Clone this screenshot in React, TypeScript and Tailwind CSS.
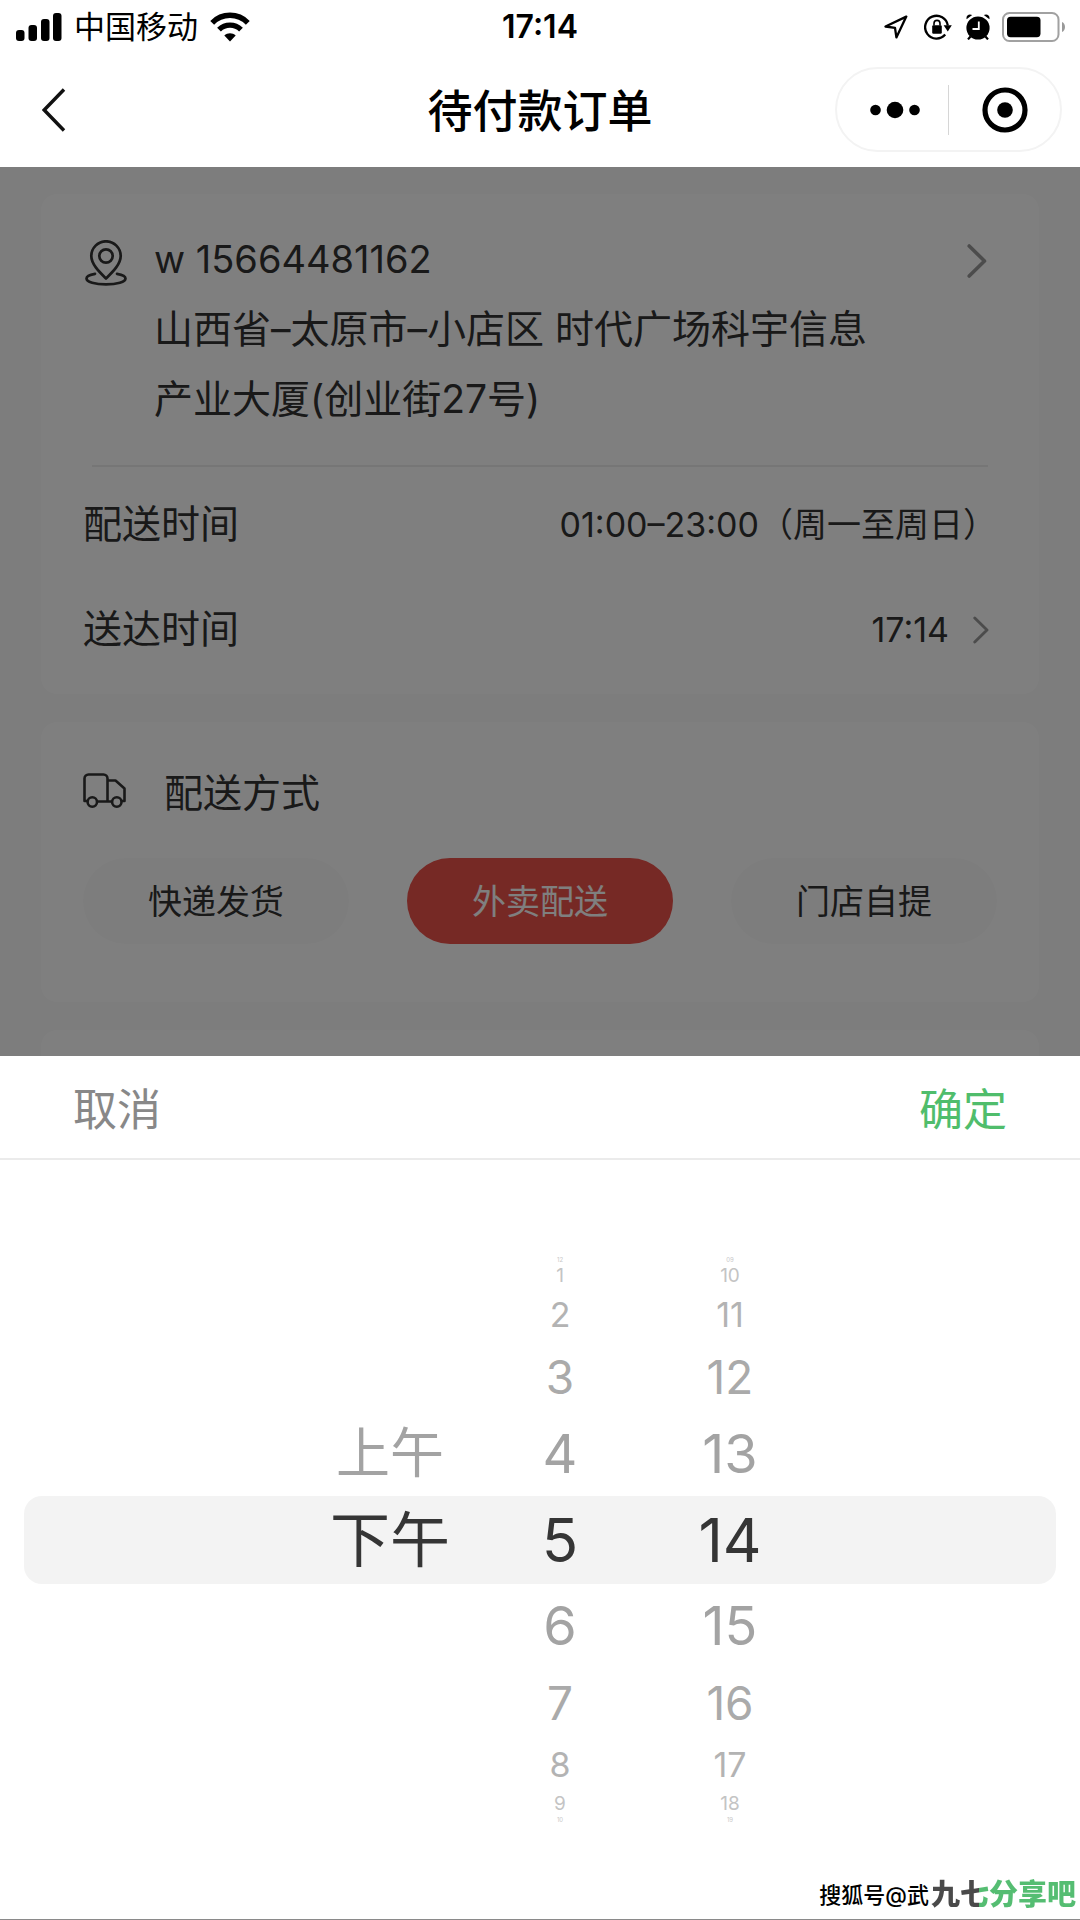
import React, { useState } from "react";

function StatusBar() {
  return (
    <div className="grid h-[54px] grid-cols-3 items-center px-4">
      <div className="flex items-center gap-3">
        <svg className="h-7 w-[46px]" viewBox="0 0 46 28" aria-hidden="true">
          <rect x="0" y="17" width="8.5" height="11" rx="3" />
          <rect x="12.5" y="12" width="8.5" height="16" rx="3" />
          <rect x="25" y="6" width="8.5" height="22" rx="3" />
          <rect x="37" y="0" width="8.5" height="28" rx="3" />
        </svg>
        <span className="text-[31px] leading-[40px]">中国移动</span>
        <svg className="h-[30px] w-10" viewBox="0 0 40 30" aria-hidden="true">
          <g fill="none" stroke="#000" strokeWidth="5.4">
            <path d="M2.2 10.8 C12 0.8 28 0.8 37.8 10.8" />
            <path d="M9 17.6 C15.2 11.6 24.8 11.6 31 17.6" />
          </g>
          <path d="M14.3 23.6 C17.5 20.4 22.5 20.4 25.7 23.6 L20 29.6 Z" />
        </svg>
      </div>
      <div className="text-center text-[32px] leading-[40px] font-semibold">17:14</div>
      <div className="-mr-0.5 flex items-center justify-end">
        <svg className="mr-4 h-6 w-6" viewBox="0 0 24 24" aria-hidden="true">
          <path d="M22.3 1.6 L1.5 11.5 L11 12.8 L12.4 22.4 Z" fill="none" stroke="#000" strokeWidth="2.3" strokeLinejoin="round" />
        </svg>
        <svg className="mr-3.5 h-7 w-7" viewBox="0 0 28 28" aria-hidden="true">
          <path d="M23.8 12.5 A11.4 11.4 0 1 0 21.2 21.6" fill="none" stroke="#000" strokeWidth="2.3" />
          <path d="M19.6 12.2 L27.8 12.2 L23.8 18.4 Z" />
          <rect x="8.2" y="12.3" width="9.6" height="8.4" rx="1.2" />
          <path d="M10 12.5 V10.4 a3 3 0 0 1 6 0 V12.5" fill="none" stroke="#000" strokeWidth="1.6" />
        </svg>
        <svg className="mr-3 h-[26px] w-6" viewBox="0 0 24 26" aria-hidden="true">
          <circle cx="12" cy="14" r="11.6" />
          <path d="M0.6 5.2 C-0.2 1.4 3 -0.6 6.2 1 Z M23.4 5.2 C24.2 1.4 21 -0.6 17.8 1 Z" />
          <path d="M4.5 22.5 L2 25.4 M19.5 22.5 L22 25.4" stroke="#000" strokeWidth="2.2" />
          <path d="M12.8 7.5 V15 H6.5" fill="none" stroke="#fff" strokeWidth="1.8" />
        </svg>
        <svg className="h-[30px] w-16" viewBox="0 0 64 30" aria-hidden="true">
          <rect x="1" y="1" width="55.5" height="28" rx="6.5" fill="none" stroke="#a1a1a1" strokeWidth="2" />
          <rect x="5" y="4.8" width="33.5" height="20.4" rx="3.6" />
          <path d="M60 10 C64 11.5 64 18.5 60 20 Z" fill="#999" />
        </svg>
      </div>
    </div>
  );
}

function NavBar() {
  return (
    <header className="grid h-[113px] grid-cols-3 items-center px-[18px] pb-0.5">
      <button type="button" aria-label="返回" className="ml-3.5 flex h-14 w-11 items-center justify-center">
        <svg className="h-11 w-6" viewBox="0 0 24 44" aria-hidden="true">
          <path d="M22 1.5 L2.2 22 L22 42.5" fill="none" stroke="#111" strokeWidth="3.4" />
        </svg>
      </button>
      <h1 className="pt-1 text-center text-[45px] leading-[60px] font-medium">待付款订单</h1>
      <div className="ml-auto flex h-[85px] w-[227px] items-center rounded-full border-2 border-[#f3f3f3]">
        <button type="button" aria-label="更多" className="flex h-full flex-1 items-center justify-center">
          <svg className="ml-1 h-[18px] w-[50px]" viewBox="0 0 50 18" aria-hidden="true">
            <circle cx="5.5" cy="9" r="5.3" />
            <circle cx="25" cy="9" r="8.3" />
            <circle cx="44.5" cy="9" r="5.3" />
          </svg>
        </button>
        <span className="h-[50px] w-px bg-[#d6d6d6]" />
        <button type="button" aria-label="关闭" className="flex h-full flex-1 items-center justify-center">
          <svg className="h-[46px] w-[46px]" viewBox="0 0 46 46" aria-hidden="true">
            <circle cx="23" cy="23" r="20" fill="none" stroke="#000" strokeWidth="5.2" />
            <circle cx="23" cy="23" r="7.8" />
          </svg>
        </button>
      </div>
    </header>
  );
}

function Chevron({ className }: { className: string }) {
  return (
    <svg className={className} viewBox="0 0 20 34" aria-hidden="true">
      <path d="M2.2 2 L17.5 17 L2.2 32" fill="none" stroke="#999" strokeWidth="3.6" strokeLinecap="round" strokeLinejoin="round" />
    </svg>
  );
}

function PinIcon() {
  return (
    <svg className="mt-4 ml-0.5 h-[46px] w-[42px] shrink-0" viewBox="0 0 42 46" aria-hidden="true">
      <g fill="none" stroke="#333" strokeWidth="2.7" strokeLinecap="round" strokeLinejoin="round">
        <path d="M21 38.5 C15 32.5 6.3 24.5 6.3 16 a14.7 14.7 0 0 1 29.4 0 C35.7 24.5 27 32.5 21 38.5 Z" />
        <circle cx="21" cy="16" r="6.7" />
        <path d="M10 33.8 C4.5 34.8 1.5 36.4 1.5 38.4 C1.5 41.8 10 44.4 21 44.4 C32 44.4 40.5 41.8 40.5 38.4 C40.5 36.4 37.5 34.8 32 33.8" />
      </g>
    </svg>
  );
}

function TruckIcon() {
  return (
    <svg className="mb-1 h-9 w-11" viewBox="0 0 44 36" aria-hidden="true">
      <g fill="none" stroke="#333" strokeWidth="2.6" strokeLinejoin="round">
        <path d="M4.5 28 H1.5 V5.5 a4 4 0 0 1 4 -4 H20.5 a4 4 0 0 1 4 4 V28.5" />
        <path d="M24.5 7.5 H32.5 L41.5 15.5 V28 H38.5 M14 28.5 H29" />
        <circle cx="9.3" cy="29" r="4.7" />
        <circle cx="33.8" cy="29" r="4.7" />
      </g>
    </svg>
  );
}

function DeliveryCard() {
  return (
    <section className="rounded-2xl bg-white px-[42px] pt-[30px] pb-3">
      <a href="#address" className="flex items-start">
        <PinIcon />
        <div className="ml-[27px] flex-1 leading-[70px]">
          <p className="text-[38px]">w 15664481162</p>
          <p className="max-w-[740px] text-[39px]">山西省–太原市–小店区 时代广场科宇信息产业大厦(创业街27号)</p>
        </div>
        <Chevron className="mt-5 mr-2.5 h-[34px] w-5" />
      </a>
      <hr className="mt-[31px] mr-[9px] ml-[9px] border-t-2 border-[#ececec]" />
      <div className="mt-[5px] flex h-[105px] items-center justify-between">
        <span className="text-[39px]">配送时间</span>
        <span className="text-[34px]">01:00–23:00（周一至周日）</span>
      </div>
      <button type="button" className="flex h-[105px] w-full items-center pr-2">
        <span className="text-[39px]">送达时间</span>
        <span className="ml-auto text-[34px]">17:14</span>
        <Chevron className="ml-6 h-7 w-4" />
      </button>
    </section>
  );
}

function MethodCard() {
  const [method, setMethod] = useState("外卖配送");
  return (
    <section className="rounded-2xl bg-white px-[42px] pt-[41px] pb-[58px]">
      <h2 className="flex h-[60px] items-center gap-[37px] text-[39px]">
        <TruckIcon />
        配送方式
      </h2>
      <div className="mt-[35px] grid grid-cols-3 gap-[58px]">
        {["快递发货", "外卖配送", "门店自提"].map((m) => (
          <button
            key={m}
            type="button"
            aria-pressed={m === method}
            onClick={() => setMethod(m)}
            className={
              m === method
                ? "h-[86px] rounded-full bg-[#ed524b] text-[34px] text-white"
                : "h-[86px] rounded-full bg-[#fbfbfb] text-[34px] text-[#333]"
            }
          >
            {m}
          </button>
        ))}
      </div>
    </section>
  );
}

const rowStyles = [
  "h-2 text-[6px] leading-[8px] text-[#c8c8c8]",
  "h-6 text-[19px] leading-[24px] text-[#c4c4c4]",
  "h-[54px] text-[34px] leading-[54px] text-[#b3b3b3]",
  "h-[70px] text-[46px] leading-[70px] text-[#aaaaaa]",
  "h-[84px] text-[54px] leading-[84px] text-[#a3a3a3]",
  "h-[88px] text-[60px] leading-[88px] text-[#353535]",
  "h-[84px] text-[54px] leading-[84px] text-[#a3a3a3]",
  "h-[70px] text-[46px] leading-[70px] text-[#aaaaaa]",
  "h-[54px] text-[34px] leading-[54px] text-[#b3b3b3]",
  "h-6 text-[19px] leading-[24px] text-[#c4c4c4]",
  "h-2 text-[6px] leading-[8px] text-[#c8c8c8]",
];

const columns = [
  { label: "时段", rows: ["", "", "", "", "上午", "下午", "", "", "", "", ""] },
  { label: "小时", rows: ["12", "1", "2", "3", "4", "5", "6", "7", "8", "9", "10"] },
  { label: "分钟", rows: ["09", "10", "11", "12", "13", "14", "15", "16", "17", "18", "19"] },
];

function TimePicker() {
  return (
    <section className="relative flex flex-1 flex-col border-b border-[#8a8a8a] bg-white">
      <div className="flex h-[104px] items-center justify-between border-b-2 border-[#ebebeb] px-[73px] pt-1.5 text-[44px]">
        <button type="button" className="text-[#888]">取消</button>
        <button type="button" className="text-[#50bd6c]">确定</button>
      </div>
      <div className="relative mt-24 mb-[95px] flex justify-center gap-10 pl-10">
        <div className="absolute inset-x-6 top-[240px] h-[88px] rounded-[18px] bg-[#f3f3f3]" />
        {columns.map((c) => (
          <div key={c.label} role="listbox" aria-label={c.label} className="relative flex w-[130px] flex-col">
            {c.rows.map((t, i) =>
              t ? (
                <button key={i} type="button" role="option" aria-selected={i === 5} className={"text-center whitespace-nowrap " + rowStyles[i]}>
                  {t}
                </button>
              ) : (
                <span key={i} className={rowStyles[i]} />
              )
            )}
          </div>
        ))}
      </div>
      <div className="absolute right-1 bottom-1 flex items-center leading-[40px] whitespace-nowrap">
        <span className="text-[22px] font-medium text-black">搜狐号@武</span>
        <span className="ml-0.5 bg-linear-to-r from-[#4a4a4a] from-33% to-[#55bd72] to-33% bg-clip-text text-[29px] font-black text-transparent">九七分享吧</span>
      </div>
    </section>
  );
}

export default function App() {
  return (
    <div className="flex min-h-screen flex-col bg-white font-['Inter','Noto_Sans_CJK_SC',sans-serif] text-black">
      <StatusBar />
      <NavBar />
      <main className="relative flex flex-col gap-[28px] overflow-hidden bg-[#fafafa] px-[41px] pt-[27px] text-[#333]">
        <DeliveryCard />
        <MethodCard />
        <div className="h-[26px] rounded-t-2xl bg-white" />
        <div className="absolute inset-0 bg-black/50" />
      </main>
      <TimePicker />
    </div>
  );
}
